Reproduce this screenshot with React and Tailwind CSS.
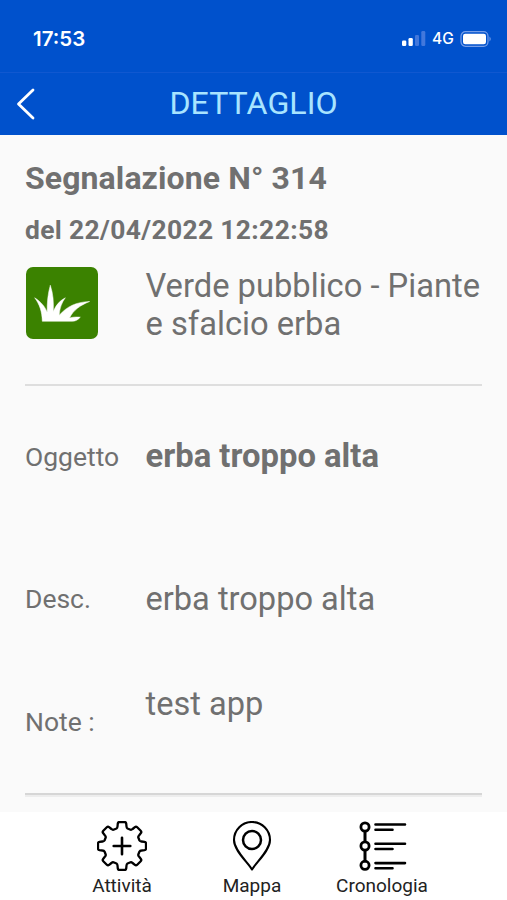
import React from "react";

const GearPlusIcon = () => (
  <svg viewBox="0 0 50 50" className="w-[50px] h-[50px]" fill="none" stroke="currentColor" strokeWidth="2.3" strokeLinecap="round" strokeLinejoin="round">
    <path d="M19.5 7.5Q20.4 7 20.5 5.5L20.8 2.5Q21 1 22.5 1H27.5Q29 1 29.2 2.5L29.5 5.5Q29.6 7 30.5 7.5L33.5 8.7Q34.5 9 35.6 8L37.9 6.1Q39.1 5.2 40.2 6.3L43.7 9.8Q44.8 10.9 43.9 12.1L42 14.4Q41 15.5 41.3 16.5L42.5 19.5Q43 20.4 44.5 20.5L47.5 20.8Q49 21 49 22.5V27.5Q49 29 47.5 29.2L44.5 29.5Q43 29.6 42.5 30.5L41.3 33.5Q41 34.5 42 35.6L43.9 37.9Q44.8 39.1 43.7 40.2L40.2 43.7Q39.1 44.8 37.9 43.9L35.6 42Q34.5 41 33.5 41.3L30.5 42.5Q29.6 43 29.5 44.5L29.2 47.5Q29 49 27.5 49H22.5Q21 49 20.8 47.5L20.5 44.5Q20.4 43 19.5 42.5L16.5 41.3Q15.5 41 14.4 42L12.1 43.9Q10.9 44.8 9.8 43.7L6.3 40.2Q5.2 39.1 6.1 37.9L8 35.6Q9 34.5 8.7 33.5L7.5 30.5Q7 29.6 5.5 29.5L2.5 29.2Q1 29 1 27.5V22.5Q1 21 2.5 20.8L5.5 20.5Q7 20.4 7.5 19.5L8.7 16.5Q9 15.5 8 14.4L6.1 12.1Q5.2 10.9 6.3 9.8L9.8 6.3Q10.9 5.2 12.1 6.1L14.4 8Q15.5 9 16.5 8.7Z" />
    <path d="M25 16.7V33.3M16.7 25H33.3" strokeWidth="2.6" />
  </svg>
);

const PinIcon = () => (
  <svg viewBox="0 0 50 50" className="w-[50px] h-[50px]" fill="none" stroke="currentColor" strokeWidth="2.1" strokeLinejoin="round">
    <path d="M25 48.5C21 41.5 7 29.5 7 19A18 18 0 0 1 43 19C43 29.5 29 41.5 25 48.5Z" />
    <circle cx="25" cy="19" r="9" strokeWidth="2.5" />
  </svg>
);

const TimelineIcon = () => (
  <svg viewBox="0 0 50 50" className="w-[50px] h-[50px]" fill="none" stroke="currentColor" strokeWidth="2.8" strokeLinecap="round">
    <circle cx="8" cy="6" r="4.1" />
    <circle cx="8" cy="25" r="4.1" />
    <circle cx="8" cy="44.3" r="4.1" />
    <path d="M8 10.5V20.5M8 29.5V40" strokeWidth="3" />
    <path d="M18.5 3.5H48M18.5 8.7H35.5M18.5 22.8H48M18.5 28H35.5M18.5 42.1H48M18.5 47.3H35.5" strokeWidth="2.6" />
  </svg>
);

const GrassIcon = () => (
  <svg viewBox="0 0 72 72" className="w-[72px] h-[72px] rounded-[7px] bg-[#3b8200]" fill="#fff">
    <path d="M16.3 54.3C16 44 13.5 37.5 8.7 30.8C15 35 19 39.5 21.2 45.3C21 36 21.8 27 24.3 18.2C27.2 27 27.8 35 27.3 44.5C30 38 33.5 34 39.3 30.8C35.5 36 33.8 41 33.2 48.2C41 39.5 50 35 63.6 34.5C54 38.5 47.5 43 43.5 51C47 50 50 49.8 54.3 50.2C52 52.8 49.5 54.3 46.5 54.3Z" stroke="#fff" strokeWidth="0.5" />
  </svg>
);

const StatusBar = () => (
  <div className="flex h-[73px] items-start justify-between border-b border-[#1058d0] pl-[33px] pr-[15px] pt-[26px] text-white">
    <span className="font-[Inter] text-[20.5px] leading-[25px] font-semibold">17:53</span>
    <div className="flex h-[25px] items-center">
      <svg viewBox="0 0 24 15" className="h-[15px] w-6">
        <rect x="0" y="9.5" width="4.3" height="5.5" rx="1.3" fill="#fff" />
        <rect x="6.5" y="7" width="4.3" height="8" rx="1.3" fill="#fff" />
        <rect x="13" y="4" width="4" height="11" rx="1.3" fill="#4278dc" />
        <rect x="19.3" y="0" width="4" height="15" rx="1.3" fill="#4278dc" />
      </svg>
      <span className="ml-[6px] w-[23px] font-[Inter] text-[15.5px] font-medium">4G</span>
      <svg viewBox="0 0 32 16" className="ml-[5px] h-4 w-8">
        <rect x="1" y="0.7" width="27" height="14.6" rx="4.5" fill="none" stroke="#779fe8" strokeWidth="1.2" />
        <rect x="3" y="2.7" width="23" height="10.6" rx="2.2" fill="#fff" />
        <path d="M29.5 5.5Q32 8 29.5 10.5Z" fill="#779fe8" />
      </svg>
    </div>
  </div>
);

const tabs = [
  { label: "Attività", icon: <GearPlusIcon /> },
  { label: "Mappa", icon: <PinIcon /> },
  { label: "Cronologia", icon: <TimelineIcon /> },
];

export default function App() {
  return (
    <div className="flex h-[900px] w-[507px] flex-col overflow-hidden bg-[#fafafa] font-[Roboto,sans-serif] text-[#707070]">
      <header className="h-[135px] shrink-0 bg-[#0051cc]">
        <StatusBar />
        <div className="grid h-[62px] grid-cols-[60px_1fr_60px] items-center">
          <button className="pl-4">
            <svg viewBox="0 0 20 32" className="h-8 w-5" fill="none" stroke="#fff" strokeWidth="2.8" strokeLinecap="round" strokeLinejoin="round">
              <path d="M17 2L2.5 16L17 30" />
            </svg>
          </button>
          <h1 className="pb-0.5 text-center text-[32.2px] leading-[40px] text-[#a8e4ff]">DETTAGLIO</h1>
        </div>
      </header>

      <main className="flex-1 px-[25px]">
        <h2 className="pt-[23px] text-[32px] leading-[40px] font-bold tracking-[0.1px]">Segnalazione N° 314</h2>
        <p className="mt-4 text-[26.4px] leading-[32px] font-bold tracking-[0.36px]">del 22/04/2022 12:22:58</p>
        <div className="mt-[21px] flex h-[119px] border-b-2 border-[#dedede]">
          <div className="w-[120.5px] shrink-0 pl-px">
            <GrassIcon />
          </div>
          <p className="text-[32.7px] leading-[38px] whitespace-nowrap">
            Verde pubblico - Piante
            <br />e sfalcio erba
          </p>
        </div>
        <div className="mt-[51px] flex h-10 items-center">
          <span className="w-[120.5px] text-[26.5px]">Oggetto</span>
          <span className="text-[32.8px] font-bold">erba troppo alta</span>
        </div>
        <div className="mt-[102px] flex h-10 items-center">
          <span className="w-[120.5px] text-[26.5px]">Desc.</span>
          <span className="text-[32.6px]">erba troppo alta</span>
        </div>
        <div className="mt-[64px] flex h-[112px] items-start border-b-2 border-[#d6d6d6] shadow-[0_2px_0_#ededed]">
          <span className="w-[120.5px] pt-[22px] text-[26.5px] leading-[34px]">Note :</span>
          <span className="pt-px text-[32.6px] leading-[40px]">test app</span>
        </div>
      </main>

      <nav className="flex h-[88px] shrink-0 justify-center bg-white pt-[9px] pr-[3px] text-black">
        {tabs.map((tab) => (
          <button key={tab.label} className="flex w-[130px] flex-col items-center">
            {tab.icon}
            <span className="mt-[3px] text-[19px] leading-[24px] text-[#222]">{tab.label}</span>
          </button>
        ))}
      </nav>
    </div>
  );
}
